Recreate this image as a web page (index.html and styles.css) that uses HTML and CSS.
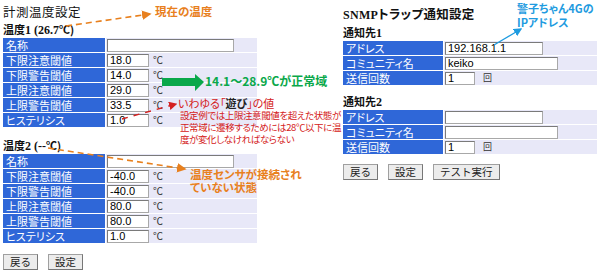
FILE: index.html
```html
<!DOCTYPE html>
<html lang="ja">
<head>
  <meta charset="UTF-8">
  <title>計測温度設定</title>
  <link rel="stylesheet" href="styles.css">
</head>
<body>
  <div class="page">
    <div class="col left">
      <h1>計測温度設定</h1>
      <h2>温度<span class="num">1 (26.7</span>℃)</h2>
      <table class="form">
        <tr><th>名称</th><td><input class="name" type="text" value=""></td></tr>
        <tr><th>下限注意閾値</th><td><input class="val" type="text" value="18.0"><span class="unit">℃</span></td></tr>
        <tr><th>下限警告閾値</th><td><input class="val" type="text" value="14.0"><span class="unit">℃</span></td></tr>
        <tr><th>上限注意閾値</th><td><input class="val" type="text" value="29.0"><span class="unit">℃</span></td></tr>
        <tr><th>上限警告閾値</th><td><input class="val" type="text" value="33.5"><span class="unit">℃</span></td></tr>
        <tr><th>ヒステリシス</th><td><input class="val" type="text" value="1.0"><span class="unit">℃</span></td></tr>
      </table>
      <h2 class="second">温度<span class="num">2 (--</span>℃)</h2>
      <table class="form">
        <tr><th>名称</th><td><input class="name" type="text" value=""></td></tr>
        <tr><th>下限注意閾値</th><td><input class="val" type="text" value="-40.0"><span class="unit">℃</span></td></tr>
        <tr><th>下限警告閾値</th><td><input class="val" type="text" value="-40.0"><span class="unit">℃</span></td></tr>
        <tr><th>上限注意閾値</th><td><input class="val" type="text" value="80.0"><span class="unit">℃</span></td></tr>
        <tr><th>上限警告閾値</th><td><input class="val" type="text" value="80.0"><span class="unit">℃</span></td></tr>
        <tr><th>ヒステリシス</th><td><input class="val" type="text" value="1.0"><span class="unit">℃</span></td></tr>
      </table>
      <div class="btns">
        <button>戻る</button>
        <button>設定</button>
      </div>
    </div>

    <div class="col right">
      <h1><span class="num">SNMP</span>トラップ通知設定</h1>
      <h2>通知先<span class="num">1</span></h2>
      <table class="form">
        <tr><th>アドレス</th><td><input class="addr" type="text" value="192.168.1.1"></td></tr>
        <tr><th>コミュニティ名</th><td><input class="comm" type="text" value="keiko"></td></tr>
        <tr><th>送信回数</th><td><input class="count" type="text" value="1"><span class="unit times">回</span></td></tr>
      </table>
      <h2 class="second">通知先<span class="num">2</span></h2>
      <table class="form">
        <tr><th>アドレス</th><td><input class="addr" type="text" value=""></td></tr>
        <tr><th>コミュニティ名</th><td><input class="comm" type="text" value=""></td></tr>
        <tr><th>送信回数</th><td><input class="count" type="text" value="1"><span class="unit times">回</span></td></tr>
      </table>
      <div class="btns">
        <button>戻る</button>
        <button>設定</button>
        <button>テスト実行</button>
      </div>
    </div>

    <!-- annotations drawn over the form -->
    <svg class="marks" width="604" height="275" viewBox="0 0 604 275">
      <defs>
        <marker id="ao" markerWidth="6" markerHeight="6" refX="5" refY="3" orient="auto">
          <path d="M0,0 L6,3 L0,6 z" fill="#e8801e"/>
        </marker>
        <marker id="ar" markerWidth="6" markerHeight="6" refX="5" refY="3" orient="auto">
          <path d="M0,0 L6,3 L0,6 z" fill="#d42020"/>
        </marker>
        <marker id="ab" markerWidth="6" markerHeight="6" refX="5" refY="3" orient="auto">
          <path d="M0,0 L6,3 L0,6 z" fill="#1e9be0"/>
        </marker>
      </defs>
      <line x1="66" y1="26" x2="150" y2="14" stroke="#e8801e" stroke-width="1.6" stroke-dasharray="6 4" marker-end="url(#ao)"/>
      <line x1="48" y1="148" x2="185" y2="169" stroke="#e8801e" stroke-width="1.6" stroke-dasharray="6 4" marker-end="url(#ao)"/>
      <line x1="122" y1="119" x2="176" y2="104" stroke="#d42020" stroke-width="1.4" stroke-dasharray="6 6" marker-end="url(#ar)"/>
      <line x1="494" y1="45" x2="521" y2="29" stroke="#1e9be0" stroke-width="1.4" marker-end="url(#ab)"/>
      <polygon points="162,78 195,78 195,74 204,82 195,91 195,86 162,86" fill="#0aa84a"/>
    </svg>
    <div class="note orange now">現在の温度</div>
    <div class="note green range">14.1～28.9℃が正常域</div>
    <div class="note red play">いわゆる「<b>遊び</b>」の値</div>
    <div class="note red detail">設定例では上限注意閾値を超えた状態が<br>正常域に遷移するためには28℃以下に温<br>度が変化しなければならない</div>
    <div class="note orange nosensor">温度センサが接続され<br>ていない状態</div>
    <div class="note blue ip">警子ちゃん4Gの<br>IPアドレス</div>
  </div>
</body>
</html>
```

FILE: styles.css
```css
body {
  margin: 0;
  background: #fff;
  font-family: "Noto Sans CJK JP", sans-serif;
  font-feature-settings: "palt";
  color: #111;
}
.page {
  position: relative;
  width: 604px;
  height: 275px;
  display: flex;
  overflow: hidden;
}
.col {
  display: flex;
  flex-direction: column;
  align-items: flex-start;
}
.left {
  margin-left: 2px;
  padding-top: 4px;
  width: 256px;
}
.right {
  margin-left: 84px;
  padding-top: 6px;
  width: 256px;
}
h1 {
  margin: 0 0 0 1px;
  font-size: 12.5px;
  line-height: 15px;
  font-weight: normal;
  letter-spacing: 0.5px;
}
.right h1 {
  font-weight: bold;
  letter-spacing: 0.3px;
}
h2 {
  margin: 3px 0 0 1px;
  font-size: 11px;
  line-height: 14px;
  font-weight: bold;
}
.right h2 {
  margin-top: 2px;
}
.left h2.second {
  margin-top: 10px;
}
.right h2.second {
  margin-top: 8px;
}
.num {
  font-family: "Liberation Serif", serif;
  font-size: 12px;
}
.form {
  border-collapse: separate;
  border-spacing: 1px;
  background: #fff;
  width: 256px;
}
.form th {
  background: #2f67d8;
  color: #fff;
  font-weight: normal;
  font-size: 11px;
  text-align: left;
  padding: 0 0 0 3px;
  height: 14px;
  line-height: 14px;
  width: 99px;
  white-space: nowrap;
}
.right .form th {
  width: 97px;
}
.form td {
  background: #e8e8f8;
  padding: 0;
  height: 14px;
  white-space: nowrap;
  display: flex;
  align-items: center;
}
.form tr {
  height: 14px;
}
input {
  box-sizing: border-box;
  height: 13px;
  margin: 0 0 0 1px;
  padding: 0 2px;
  border: 1px solid #a8a8a8;
  border-top-color: #7a7a7a;
  border-left-color: #7a7a7a;
  background: #fff;
  font-family: "Liberation Sans", sans-serif;
  font-size: 11px;
  line-height: 11px;
  color: #000;
}
input.name { width: 127px; }
input.val { width: 42px; }
input.addr { width: 98px; }
input.comm { width: 113px; }
input.count { width: 30px; }
.unit {
  font-size: 10px;
  line-height: 12px;
  margin-left: 4px;
  color: #333;
}
.times {
  margin-left: 8px;
  font-size: 9px;
}
.btns {
  display: flex;
  gap: 10px;
  margin: 10px 0 0 1px;
}
.right .btns {
  margin-top: 9px;
}
button {
  height: 16px;
  padding: 0 6px;
  font-family: "Noto Sans CJK JP", sans-serif;
  font-size: 10.5px;
  line-height: 14px;
  background: #ececec;
  border: 1px solid #a0a0a0;
  border-right-color: #777;
  border-bottom-color: #777;
  color: #222;
}
.marks {
  position: absolute;
  left: 0;
  top: 0;
  pointer-events: none;
}
.note {
  position: absolute;
  white-space: nowrap;
  font-weight: bold;
}
.orange { color: #e8801e; }
.green { color: #0aa84a; }
.red { color: #d42020; }
.blue { color: #1e9be0; }
.now {
  left: 155px;
  top: 3px;
  font-size: 11.5px;
  line-height: 16px;
}
.range {
  left: 205px;
  top: 73px;
  font-size: 12px;
  line-height: 16px;
}
.play {
  left: 178px;
  top: 96px;
  font-size: 11px;
  line-height: 14px;
  font-weight: normal;
}
.play b {
  font-weight: bold;
  color: #222;
}
.detail {
  left: 180px;
  top: 109px;
  font-size: 9.5px;
  line-height: 12px;
  letter-spacing: -0.4px;
  font-weight: normal;
}
.nosensor {
  left: 190px;
  top: 168px;
  font-size: 11.5px;
  line-height: 13px;
}
.ip {
  left: 517px;
  top: 1px;
  font-size: 11px;
  line-height: 14px;
}
```
